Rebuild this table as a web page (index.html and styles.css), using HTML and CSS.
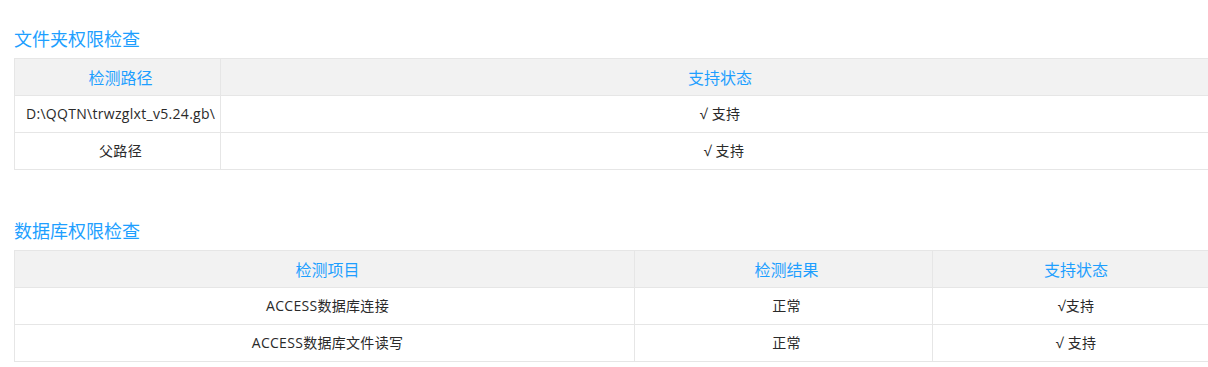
FILE: index.html
```html
<!DOCTYPE html>
<html lang="zh-CN">
<head>
<meta charset="utf-8">
<title>权限检查</title>
<link rel="stylesheet" href="styles.css">
</head>
<body>
<div class="page">
  <section class="block">
    <h3 class="block-title">文件夹权限检查</h3>
    <table class="check-table">
      <colgroup><col class="w-path"><col></colgroup>
      <thead>
        <tr><th>检测路径</th><th>支持状态</th></tr>
      </thead>
      <tbody>
        <tr><td class="nowrap">D:\QQTN\trwzglxt_v5.24.gb\</td><td>√ 支持</td></tr>
        <tr><td>父路径</td><td>&nbsp;&nbsp;√ 支持</td></tr>
      </tbody>
    </table>
  </section>
  <section class="block">
    <h3 class="block-title">数据库权限检查</h3>
    <table class="check-table">
      <colgroup><col class="w-item"><col class="w-result"><col></colgroup>
      <thead>
        <tr><th>检测项目</th><th>检测结果</th><th>支持状态</th></tr>
      </thead>
      <tbody>
        <tr><td>ACCESS数据库连接</td><td>正常</td><td>√支持</td></tr>
        <tr><td>ACCESS数据库文件读写</td><td>正常</td><td>√ 支持</td></tr>
      </tbody>
    </table>
  </section>
</div>
</body>
</html>
```
FILE: styles.css
```css
html, body {
  margin: 0;
  padding: 0;
  background: #fff;
  overflow: hidden;
}
body {
  font-family: "Open Sans", "Noto Sans CJK SC", sans-serif;
  color: #333;
}
.page {
  width: 1200px;
  padding: 26px 14px 0 14px;
}
.block + .block {
  margin-top: 48px;
}
.block-title {
  margin: 0 0 8px 0;
  font-size: 18px;
  line-height: 24px;
  font-weight: normal;
  color: #1e9fff;
  font-family: "Noto Sans CJK SC", sans-serif;
}
.check-table {
  width: 1200px;
  border-collapse: collapse;
  table-layout: fixed;
}
.w-path { width: 206px; }
.w-item { width: 620px; }
.w-result { width: 298px; }
.check-table th,
.check-table td {
  border: 1px solid #e6e6e6;
  padding: 8px 5px 8px 11px;
  line-height: 20px;
  text-align: center;
  font-weight: normal;
}
.check-table th {
  background: #f2f2f2;
  color: #1e9fff;
  font-size: 16px;
  font-family: "Noto Sans CJK SC", sans-serif;
}
.check-table td {
  font-size: 14px;
  letter-spacing: 0.3px;
  color: #2a2a2a;
}
.nowrap { white-space: nowrap; }
```
